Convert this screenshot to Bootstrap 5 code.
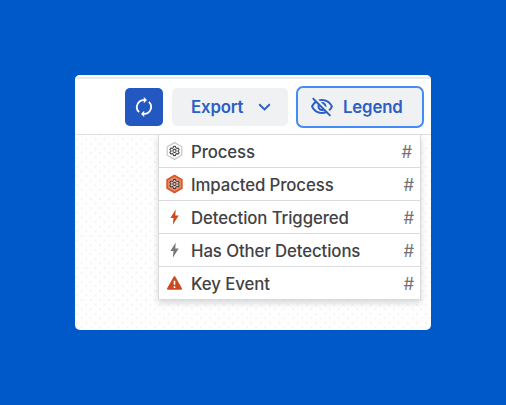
<!DOCTYPE html>
<html lang="en">
<head>
<meta charset="utf-8">
<meta name="viewport" content="width=device-width, initial-scale=1">
<title>Process legend</title>
<link href="https://cdn.jsdelivr.net/npm/bootstrap@5.3.0/dist/css/bootstrap.min.css" rel="stylesheet">
<style>
body{font-family:Inter,"Liberation Sans",sans-serif;background:#0059c9;height:405px;padding:75px}
.panel{width:356px;height:255px;border-radius:5px;background-color:#fefefe;
background-image:radial-gradient(circle,#efeff1 0 .5px,transparent 1.2px),radial-gradient(circle,#efeff1 0 .5px,transparent 1.2px);
background-size:9.2px 9.2px;background-position:2px 0,6.6px 4.6px}
.strip{height:4px;border-bottom:2px solid #e8eaee;background:#fbfbfc}
.toolbar{height:56px;border-bottom:1.5px solid #dfe0e4;padding:1px 7px 0 50px}
.tool{--bs-btn-bg:#f0f1f3;--bs-btn-color:#2c5fc3;--bs-btn-hover-bg:#e6e9ef;--bs-btn-hover-color:#2458c0;--bs-btn-border-width:0px;--bs-btn-font-weight:600;--bs-btn-font-size:16.8px;--bs-btn-border-radius:5px;--bs-btn-line-height:24px;height:38px;padding:0}
.tool-refresh{--bs-btn-bg:#2358c1;--bs-btn-color:#fff;width:38px;margin-right:9px}
.tool-export{width:116px;margin-right:8px;padding-left:19px}
.tool-export svg{margin-left:15px}
.tool-legend{width:128px;height:42px;border:2px solid #438bf7;border-radius:7px;padding-left:12px}
.tool-legend svg{margin-right:9px}
.tool-text{letter-spacing:-.15px}
.legend{width:263px;margin-left:83px;--bs-list-group-border-color:#dadbdf;--bs-list-group-border-radius:0;box-shadow:0 3px 6px rgba(40,44,55,.18)}
.legend .list-group-item{height:33px;padding:0 6px 0 7px;border-width:0 1px 1px;font-size:16.8px;font-weight:450;line-height:30px;letter-spacing:-.1px;color:#414245}
.legend span{padding-top:2px}
.legend svg{margin-right:8px}
.count{color:#727378;font-weight:400}
.count-first{margin-right:2px}
</style>
<script src="https://cdn.jsdelivr.net/npm/bootstrap@5.3.0/dist/js/bootstrap.bundle.min.js"></script>
</head>
<body class="overflow-hidden">
<svg class="d-none" aria-hidden="true">
<symbol id="gear" viewBox="0 0 24 24"><g fill="none" stroke="currentColor" stroke-width="2.3" stroke-linejoin="round"><path d="M10 2.5h4l.7 3 2 1.1 2.9-.9 2 3.5-2.2 2.1v1.4l2.2 2.1-2 3.5-2.9-.9-2 1.1-.7 3h-4l-.7-3-2-1.1-2.9.9-2-3.5 2.2-2.1v-1.4L2.4 9.2l2-3.5 2.9.9 2-1.1z"/><circle cx="12" cy="12" r="3.3"/></g></symbol>
<symbol id="bolt" viewBox="0 0 16 18"><path fill="currentColor" d="M9.2 1.5 3.9 9.9H7L6.3 16.8 12.2 7.5H8.8z"/></symbol>
</svg>
<main class="panel overflow-hidden">
<div class="strip"></div>
<div class="toolbar d-flex align-items-center bg-white">
<button class="btn tool tool-refresh d-flex align-items-center justify-content-center" aria-label="Refresh">
<svg width="22" height="22" viewBox="0 0 22 22" fill="none" stroke="currentColor" stroke-width="1.8"><path d="M6.1 16.2A7 7 0 0 1 11 4.1M15.9 5.8A7 7 0 0 1 11 17.9"/><path d="M10.8.9 14 4.1 10.8 7.3zM11.2 14.7 8 17.9 11.2 21.1z" fill="currentColor" stroke="none"/></svg>
</button>
<button class="btn tool tool-export d-flex align-items-center"><span class="tool-text">Export</span>
<svg width="13" height="8" viewBox="0 0 13 8" fill="none" stroke="currentColor" stroke-width="1.9"><path d="m1.2 1.2 5.3 5.2 5.3-5.2"/></svg>
</button>
<button class="btn tool tool-legend d-flex align-items-center">
<svg width="24" height="24" viewBox="0 0 24 24" fill="currentColor"><path d="M12 6c3.79 0 7.17 2.13 8.82 5.5-.59 1.22-1.42 2.27-2.41 3.12l1.41 1.41c1.39-1.23 2.49-2.77 3.18-4.53C21.27 7.11 17 4 12 4c-1.27 0-2.49.2-3.64.57l1.65 1.65C10.66 6.09 11.32 6 12 6zm-1.07 1.14L13 9.21c.57.25 1.03.71 1.28 1.28l2.07 2.07c.08-.34.14-.7.14-1.07C16.5 9.01 14.48 7 12 7c-.37 0-.72.05-1.07.14zM2.01 3.87l2.68 2.68C3.06 7.83 1.77 9.53 1 11.5 2.73 15.89 7 19 12 19c1.52 0 2.98-.29 4.32-.82l3.42 3.42 1.41-1.41L3.42 2.45 2.01 3.87zm7.5 7.5 2.61 2.61c-.04.01-.08.02-.12.02-1.38 0-2.5-1.12-2.5-2.5 0-.05.01-.08.01-.13zm-3.4-3.4 1.75 1.75c-.23.55-.36 1.15-.36 1.78 0 2.48 2.02 4.5 4.5 4.5.63 0 1.23-.13 1.77-.36l.98.98c-.88.24-1.8.38-2.75.38-3.79 0-7.17-2.13-8.82-5.5.7-1.43 1.72-2.61 2.93-3.53z"/></svg>
<span class="tool-text">Legend</span></button>
</div>
<ul class="list-group legend">
<li class="list-group-item d-flex align-items-center"><svg width="17" height="20" viewBox="0 0 17 20"><path d="M8.5 1.6 15.8 5.8v8.4L8.5 18.4 1.2 14.2V5.8z" fill="#fff" stroke="#c7c9cd" stroke-width="1.3"/><use href="#gear" x="2.7" y="4.2" width="11.6" height="11.6" color="#4a4b4e"/></svg><span>Process</span><span class="count count-first ms-auto">#</span></li>
<li class="list-group-item d-flex align-items-center"><svg width="17" height="20" viewBox="0 0 17 20"><path d="M8.5 1.6 15.8 5.8v8.4L8.5 18.4 1.2 14.2V5.8z" fill="#ee8b65" stroke="#d95a2b" stroke-width="1.8"/><circle cx="8.5" cy="10" r="4.8" fill="#f2c6b4"/><use href="#gear" x="2.7" y="4.2" width="11.6" height="11.6" color="#4a4444"/></svg><span>Impacted Process</span><span class="count ms-auto">#</span></li>
<li class="list-group-item d-flex align-items-center"><svg width="17" height="18" color="#d04a1b"><use href="#bolt"/></svg><span>Detection Triggered</span><span class="count ms-auto">#</span></li>
<li class="list-group-item d-flex align-items-center"><svg width="17" height="18" color="#77787c"><use href="#bolt"/></svg><span>Has Other Detections</span><span class="count ms-auto">#</span></li>
<li class="list-group-item d-flex align-items-center"><svg width="17" height="18" viewBox="0 0 17 18"><path d="M8.5 3.2 15 14.8H2z" fill="#cb4b20" stroke="#cb4b20" stroke-width="2" stroke-linejoin="round"/><path d="M8.5 6.8v4M8.5 12.3v1.6" stroke="#fff" stroke-width="1.6"/></svg><span>Key Event</span><span class="count ms-auto">#</span></li>
</ul>
</main>
</body>
</html>
